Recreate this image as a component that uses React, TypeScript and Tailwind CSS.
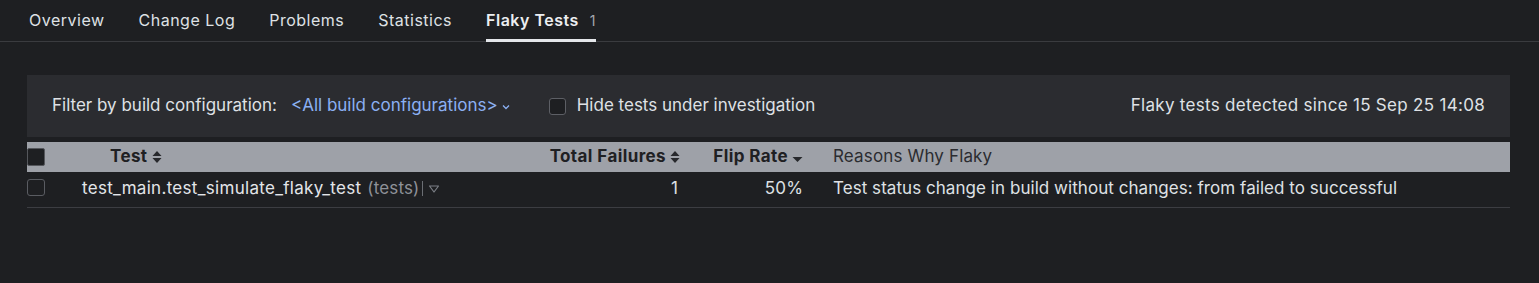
import React from "react";

const tabs = ["Overview", "Change Log", "Problems", "Statistics"];

function SortBoth() {
  return (
    <svg width="10" height="14" viewBox="0 0 10 14" className="ml-[4px] shrink-0">
      <path d="M5 1 L9.5 6 H0.5 Z" fill="#27282c" />
      <path d="M5 13 L9.5 8 H0.5 Z" fill="#27282c" />
    </svg>
  );
}

function SortDown() {
  return (
    <svg width="11" height="14" viewBox="0 0 11 14" className="ml-[4px] shrink-0">
      <path d="M0.5 7 H10.5 L5.5 12 Z" fill="#27282c" />
    </svg>
  );
}

export default function App() {
  return (
    <div
      className="w-[1539px] h-[283px] bg-[#1e1f22] text-[#dfe1e5] overflow-hidden"
      style={{ fontFamily: "Inter, 'Noto Sans', sans-serif" }}
    >
      {/* Tabs */}
      <div className="h-[42px] border-b border-[#3a3b3f] flex items-end pl-[29px] gap-[34px] tracking-[0.5px]">
        {tabs.map((t) => (
          <div key={t} className="h-[41px] flex items-center text-[16px] pb-[1px] text-[#dfe1e5]">
            {t}
          </div>
        ))}
        <div className="h-[41px] flex items-center text-[16px] pb-[1px] relative">
          <span className="font-semibold text-[#eceef1]">Flaky Tests</span>
          <span className="ml-[11px] text-[14px] text-[#a3a6ad]">1</span>
          <div className="absolute left-0 right-0 bottom-[-1px] h-[3px] bg-[#e4e6ea]" />
        </div>
      </div>

      <div className="px-[27px] pr-[29px] pt-[33px] text-[17px] tracking-[0.15px]">
        {/* Filter panel */}
        <div className="h-[62px] bg-[#2b2c30] flex items-center pl-[25px] pr-[25px] tracking-normal">
          <span>Filter by build configuration:</span>
          <span className="ml-[14px] text-[#8bb0f3] flex items-center">
            &lt;All build configurations&gt;
            <svg width="10" height="8" viewBox="0 0 10 8" className="ml-[3px] mt-[2px]">
              <path d="M2 2.5 L5 5.5 L8 2.5" stroke="#8bb0f3" strokeWidth="1.3" fill="none" />
            </svg>
          </span>
          <span className="ml-[38px] w-[17px] h-[17px] rounded-[3px] border border-[#5d5f65] bg-[#1e1f22]" />
          <span className="ml-[11px]">Hide tests under investigation</span>
          <span className="ml-auto tracking-[0.3px]">Flaky tests detected since 15 Sep 25 14:08</span>
        </div>

        {/* Table */}
        <div className="mt-[5px]">
          <div className="h-[30px] bg-[#9ea1a8] grid grid-cols-[55px_448px_158px_123px_1fr] items-center">
            <div className="flex items-center">
              <span className="w-[18px] h-[18px] rounded-[2px] bg-[#1e1f22] border border-[#55575c]" />
            </div>
            <div className="pl-[28px] flex items-center font-bold tracking-[0.4px] text-[#1f2023]">
              Test
              <SortBoth />
            </div>
            <div className="flex items-center justify-end pr-[8px] font-bold tracking-[0.4px] text-[#1f2023]">
              Total Failures
              <SortBoth />
            </div>
            <div className="flex items-center justify-end pr-[8px] font-bold tracking-[0.4px] text-[#1f2023]">
              Flip Rate
              <SortDown />
            </div>
            <div className="pl-[22px] text-[#2b2c30]">Reasons Why Flaky</div>
          </div>

          <div className="h-[36px] border-b border-[#3c3d42] grid grid-cols-[55px_448px_158px_123px_1fr] items-center">
            <div className="flex items-center pb-[4px]">
              <span className="w-[18px] h-[17px] rounded-[3px] border border-[#5a5c62]" />
            </div>
            <div className="flex items-center pb-[2px]">
              <span className="text-[#e3e5e9] tracking-[0.3px]">test_main.test_simulate_flaky_test</span>
              <span className="ml-[6px] text-[#8e9198]">(tests)</span>
              <span className="ml-[3px] w-[1px] h-[15px] bg-[#6b6e74]" />
              <svg width="12" height="10" viewBox="0 0 12 10" className="ml-[5px]">
                <path d="M1.5 2 H10.5 L6 8 Z" stroke="#7b7e85" strokeWidth="1.2" fill="none" strokeLinejoin="round" />
              </svg>
            </div>
            <div className="text-right pr-[10px] pb-[2px]">1</div>
            <div className="text-right pr-[8px] pb-[2px]">50%</div>
            <div className="pl-[22px] pb-[2px] tracking-[0.05px]">Test status change in build without changes: from failed to successful</div>
          </div>
        </div>
      </div>
    </div>
  );
}
